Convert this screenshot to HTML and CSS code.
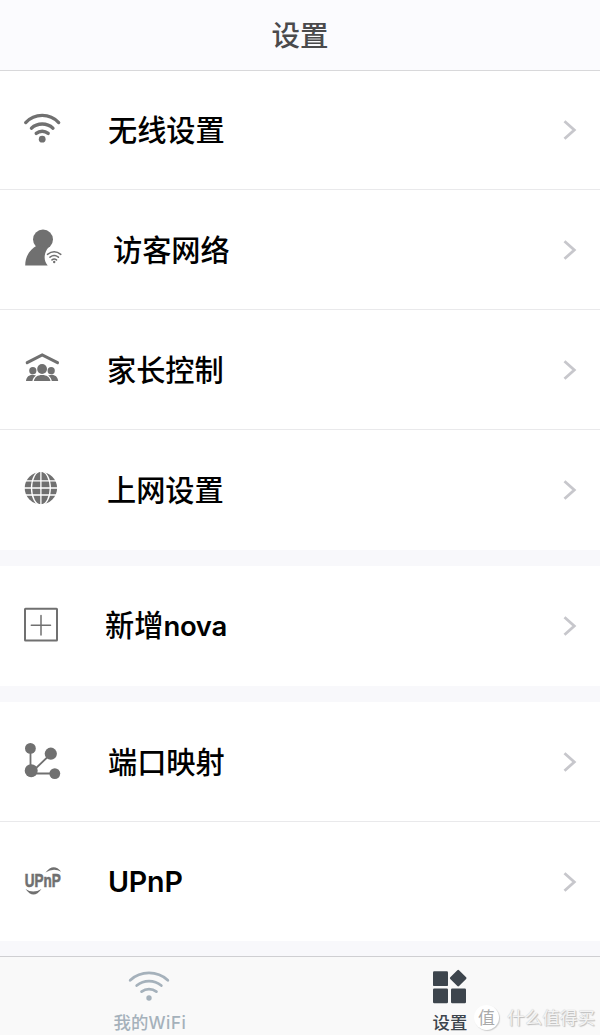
FILE: index.html
```html
<!DOCTYPE html>
<html lang="zh-CN">
<head>
    <meta charset="UTF-8">
    <meta name="viewport" content="width=device-width, initial-scale=1.0">
    <title>设置</title>
    <link rel="stylesheet" href="styles.css">
</head>
<body>

    <div class="app">
        <header class="header">
            <h1>设置</h1>
        </header>

        <main class="content">
            <div class="group">
                <a class="row">
                    <svg class="icon" viewBox="0 0 60 60">
                        <path class="line" stroke-width="3.3" d="M15.7 22.6A22.5 22.5 0 0 1 48.7 22.6M21.4 28.2A16 16 0 0 1 43 28.2M26.2 33.4A9.5 9.5 0 0 1 38.2 33.4"/>
                        <circle cx="32.2" cy="39.2" r="3.4"/>
                    </svg>
                    <span class="label wifi-label">无线设置</span>
                    <svg class="arrow" viewBox="0 0 16 24"><path d="M2.5 3.2L12.3 12L2.5 20.8"/></svg>
                </a>
                <a class="row">
                    <svg class="icon" viewBox="0 0 60 60">
                        <circle cx="33" cy="19.5" r="10"/>
                        <path d="M15.2 45.5C15.2 36 20 29.5 27 25.5L38.5 27C34 33 33 40 37.7 45.5Z"/>
                        <path class="line" stroke-width="1.5" d="M37.5 34.4Q44.2 29.3 50.8 34.4M40 37.2Q44.2 34 48.4 37.2M42 39.9Q44.2 38 46.5 39.9"/>
                        <circle cx="44.2" cy="42" r="1.2"/>
                    </svg>
                    <span class="label guest-label">访客网络</span>
                    <svg class="arrow" viewBox="0 0 16 24"><path d="M2.5 3.2L12.3 12L2.5 20.8"/></svg>
                </a>
                <a class="row">
                    <svg class="icon" viewBox="0 0 60 60">
                        <path class="line" stroke-width="3" d="M17.2 22.7L32.2 14.9L47.5 22.7"/>
                        <circle cx="22.8" cy="30.7" r="3.6"/>
                        <circle cx="41.2" cy="30.7" r="3.6"/>
                        <path d="M16 41C16.5 37 19 34.8 22.8 34.8L26 35.5C23.8 37 22.8 38.8 22.4 41ZM48.2 41C47.7 37 45.2 34.8 41.4 34.8L38.2 35.5C40.4 37 41.4 38.8 41.8 41Z"/>
                        <circle cx="32.1" cy="29" r="4.9"/>
                        <path d="M23.8 41C24.8 37 27.5 35 32.1 35C36.7 35 39.5 37 40.5 41Z"/>
                    </svg>
                    <span class="label parent-label">家长控制</span>
                    <svg class="arrow" viewBox="0 0 16 24"><path d="M2.5 3.2L12.3 12L2.5 20.8"/></svg>
                </a>
                <a class="row">
                    <svg class="icon" viewBox="0 0 60 60">
                        <circle cx="30.9" cy="28.1" r="16.2"/>
                        <path class="cut" d="M30.9 11V45M14 20.8H48M14 28H48M14 35H48"/>
                        <ellipse class="cut" cx="30.9" cy="28.1" rx="9.4" ry="17"/>
                    </svg>
                    <span class="label net-label">上网设置</span>
                    <svg class="arrow" viewBox="0 0 16 24"><path d="M2.5 3.2L12.3 12L2.5 20.8"/></svg>
                </a>
            </div>

            <div class="group">
                <a class="row">
                    <svg class="icon" viewBox="0 0 60 60">
                        <rect class="line" stroke-width="2" x="15" y="12.7" width="32" height="31.8" rx=".5"/>
                        <path class="line" stroke-width="1.5" d="M21.3 29.3H40.5M31 19.6V39"/>
                    </svg>
                    <span class="label nova-label">新增<span class="latin">nova</span></span>
                    <svg class="arrow" viewBox="0 0 16 24"><path d="M2.5 3.2L12.3 12L2.5 20.8"/></svg>
                </a>
            </div>

            <div class="group">
                <a class="row">
                    <svg class="icon" viewBox="0 0 60 60">
                        <path class="line" stroke-width="1.8" d="M20.5 16.5V38.5M23 39L40.7 22M21 41.5H44.7"/>
                        <circle cx="20.4" cy="16.4" r="5.4"/>
                        <circle cx="40.8" cy="21.7" r="6.1"/>
                        <circle cx="21.2" cy="38.7" r="6.5"/>
                        <circle cx="44.8" cy="41.6" r="5.4"/>
                    </svg>
                    <span class="label port-label">端口映射</span>
                    <svg class="arrow" viewBox="0 0 16 24"><path d="M2.5 3.2L12.3 12L2.5 20.8"/></svg>
                </a>
                <a class="row">
                    <svg class="icon" viewBox="0 0 60 60">
                        <text class="upnp" x="14.8" y="34.8" textLength="36" lengthAdjust="spacingAndGlyphs">UPnP</text>
                        <path d="M15.5 37Q23 42 31.5 37Q23.5 48 15.5 37ZM35.5 20.5Q43.5 10.5 51.2 19.7Q43.5 15.5 35.5 20.5Z"/>
                    </svg>
                    <span class="label upnp-label">UPnP</span>
                    <svg class="arrow" viewBox="0 0 16 24"><path d="M2.5 3.2L12.3 12L2.5 20.8"/></svg>
                </a>
            </div>
        </main>

        <nav class="tabs">
            <a class="tab">
                <svg class="tab-icon wifi-tab" viewBox="0 0 44 36">
                    <path class="tab-line" d="M3.2 12.2A28 28 0 0 1 40.8 12.2M9.7 17.5A19.5 19.5 0 0 1 34.3 17.5M14.6 23.6A12 12 0 0 1 29.4 23.6"/>
                    <circle cx="22" cy="30" r="2.7"/>
                </svg>
                <span>我的<span class="tab-latin">WiFi</span></span>
            </a>
            <a class="tab active">
                <svg class="tab-icon" viewBox="0 0 44 36">
                    <rect x="5" y="3.3" width="15" height="14.8" rx="1.2"/>
                    <rect x="5" y="20.4" width="15" height="14.8" rx="1.2"/>
                    <rect x="23" y="20.4" width="15" height="14.8" rx="1.2"/>
                    <rect x="24" y="3.9" width="12.4" height="12.4" rx="1.2" transform="rotate(45 30.2 10.1)"/>
                </svg>
                <span>设置</span>
            </a>
        </nav>

        <div class="watermark">
            <span class="badge">值</span>
            <span>什么值得买</span>
        </div>
    </div>

</body>
</html>
```
FILE: styles.css
```css
:root {
    --icon-color: #707070;
    --band-color: #f8f8fb;
    --divider: #e9e9eb;
    --tab-color: #a5b1bb;
    --tab-active: #3d454d;
}

* {
    box-sizing: border-box;
    margin: 0;
    padding: 0;
}

body {
    font-family: "Noto Sans CJK SC", sans-serif;
    background-color: var(--band-color);
    color: #000;
}

.app {
    position: relative;
    display: flex;
    flex-direction: column;
    height: 1035px;
    overflow: hidden;
}

/* --- Header --- */
.header {
    height: 70px;
    background-color: #fbfbfe;
    text-align: center;
}

.header h1 {
    font-size: 28.5px;
    font-weight: 500;
    line-height: 68px;
    color: #4a4a4c;
}

/* --- Settings list --- */
.content {
    flex: 1;
    display: flex;
    flex-direction: column;
    gap: 16px;
}

.group {
    background-color: #fff;
}

.group:first-child {
    box-shadow: inset 0 1px #d8d8da;
}

.row {
    display: flex;
    align-items: flex-start;
    height: 120px;
    padding: 0 22px 0 10px;
}

.row:not(:last-child) {
    box-shadow: inset 0 -1px var(--divider);
}

.group:last-child .row:last-child {
    height: 119px;
}

.icon {
    width: 60px;
    height: 60px;
    margin-top: 30px;
    fill: var(--icon-color);
}

.line {
    fill: none;
    stroke: var(--icon-color);
    stroke-linecap: round;
}

.cut {
    fill: none;
    stroke: #fff;
    stroke-width: 1.3;
}

.upnp {
    font: bold 17.5px "Liberation Sans", sans-serif;
    stroke: var(--icon-color);
    stroke-width: 0.6;
}

.label {
    flex: 1;
    font-size: 29.2px;
    font-weight: 500;
    line-height: 116px;
}

.wifi-label,
.port-label {
    margin-left: 38px;
}

.guest-label {
    margin-left: 43px;
}

.parent-label,
.net-label {
    margin-left: 37px;
}

.nova-label {
    margin-left: 35px;
    line-height: 115px;
}

.upnp-label {
    margin-left: 38px;
    font-family: Inter, sans-serif;
    font-size: 28.6px;
    font-weight: 600;
    line-height: 120px;
    letter-spacing: -0.2px;
}

.latin {
    font-family: Inter, sans-serif;
    font-size: 27.5px;
    font-weight: 600;
    letter-spacing: -0.3px;
}

.arrow {
    width: 16px;
    height: 24px;
    margin-top: 48px;
    fill: none;
    stroke: #c7c7cc;
    stroke-width: 2.8;
}

/* --- Tab bar --- */
.tabs {
    display: flex;
    height: 79px;
    background-color: #f9f9f9;
    border-top: 1px solid #cfcfd2;
}

.tab {
    flex: 1;
    display: flex;
    flex-direction: column;
    align-items: center;
    padding-top: 11px;
    font-size: 17.4px;
    font-weight: 500;
    line-height: 24px;
    color: var(--tab-color);
}

.tab.active {
    color: var(--tab-active);
}

.tab-icon {
    width: 44px;
    height: 36px;
    margin-bottom: 6px;
    fill: currentColor;
}

.wifi-tab {
    margin-right: 2px;
}

.tab-latin {
    font-family: Inter, sans-serif;
    font-size: 17px;
    letter-spacing: 0.6px;
}

.tab-line {
    fill: none;
    stroke: currentColor;
    stroke-width: 2.8;
    stroke-linecap: round;
}

/* --- Watermark --- */
.watermark {
    position: absolute;
    right: 5px;
    bottom: 5px;
    display: flex;
    align-items: center;
    gap: 8px;
    font-size: 17.6px;
    line-height: 26px;
    color: #f4f4f4;
    text-shadow: 1px 1px 1px #bbb, 0 0 1px #bbb;
}

.badge {
    width: 25px;
    height: 25px;
    border-radius: 50%;
    background-color: #fff;
    box-shadow: 1px 1px 1px #ccc;
    font-size: 17px;
    line-height: 24px;
    text-align: center;
    color: #aaa;
    text-shadow: none;
}
```
